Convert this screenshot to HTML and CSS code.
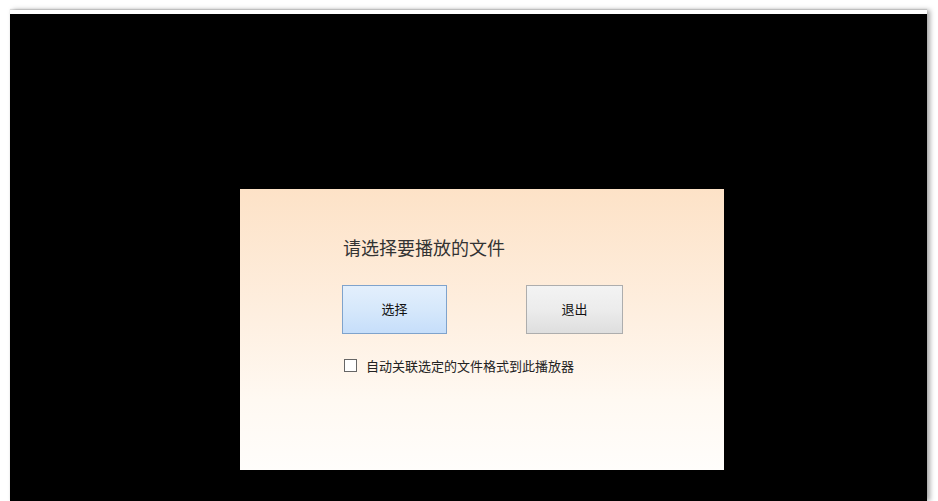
FILE: index.html
```html
<!DOCTYPE html>
<html lang="zh-CN">

<head>
    <meta charset="UTF-8">
    <meta name="viewport" content="width=device-width, initial-scale=1.0">
    <title>播放器</title>
    <link rel="stylesheet" href="styles.css">
</head>

<body>
    <div class="screen">
        <div class="window">
            <div class="stage">
                <div class="dialog">
                    <h1 class="prompt">请选择要播放的文件</h1>
                    <div class="actions">
                        <button class="btn btn-primary" type="button">选择</button>
                        <button class="btn btn-exit" type="button">退出</button>
                    </div>
                    <label class="assoc">
                        <span class="box"></span>
                        <span>自动关联选定的文件格式到此播放器</span>
                    </label>
                </div>
            </div>
        </div>
    </div>
</body>

</html>
```

FILE: styles.css
```css
html, body {
    margin: 0;
    padding: 0;
    background-color: #ffffff;
}

body {
    font-family: "Noto Sans CJK SC", "Noto Sans", sans-serif;
    width: 938px;
    height: 501px;
    overflow: hidden;
}

.screen {
    padding: 10px 11px 0 10px;
    height: 491px;
}

.window {
    height: 100%;
    border-top: 4px solid #ffffff;
    box-shadow: 0 -1px 1px rgba(0, 0, 0, 0.12), 3px 0 5px rgba(0, 0, 0, 0.35);
    box-sizing: border-box;
}

.stage {
    height: 100%;
    background-color: #000000;
    padding: 175px 0 0 230px;
    box-sizing: border-box;
}

.dialog {
    width: 484px;
    height: 281px;
    box-sizing: border-box;
    padding: 45px 0 0 102px;
    background: linear-gradient(to bottom, #fde2c7 0%, #feefe0 45%, #fff9f2 75%, #fffdfb 100%);
}

.prompt {
    margin: 0 0 0 1px;
    font-size: 18px;
    font-weight: 400;
    line-height: 26px;
    color: #333333;
}

.actions {
    display: flex;
    gap: 79px;
    margin-top: 25px;
}

.btn {
    height: 49px;
    padding: 0 0 3px;
    font-family: inherit;
    font-size: 13px;
    color: #111111;
    border-radius: 0;
    cursor: pointer;
}

.btn-primary {
    width: 105px;
    border: 1px solid #7fa3cc;
    background: linear-gradient(to bottom, #e3effc 0%, #d6e8fb 50%, #c6defa 100%);
}

.btn-exit {
    width: 97px;
    border: 1px solid #adadad;
    background: linear-gradient(to bottom, #f3f3f3 0%, #ececec 50%, #dedede 100%);
}

.assoc {
    display: flex;
    align-items: center;
    gap: 9px;
    margin-top: 22px;
    margin-left: 2px;
    font-size: 13px;
    color: #222222;
}

.box {
    width: 11px;
    height: 11px;
    border: 1px solid #666666;
    background-color: #ffffff;
}
```
